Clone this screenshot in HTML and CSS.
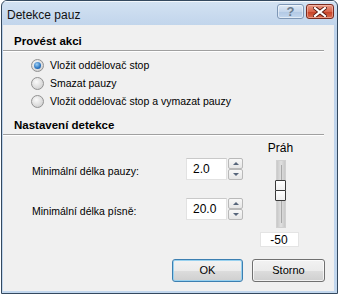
FILE: index.html
```html
<!DOCTYPE html>
<html lang="cs">

<head>
    <meta charset="UTF-8">
    <title>Detekce pauz</title>
    <link rel="stylesheet" href="styles.css">
</head>

<body>
    <div class="window">

        <!-- titulek okna -->
        <div class="titlebar">
            <span class="caption">Detekce pauz</span>
            <span class="tbtn help">?</span>
            <span class="tbtn close">
                <svg width="14" height="10" viewBox="0 0 14 10">
                    <path d="M2 1 L12 9 M12 1 L2 9" stroke="#5a1a10" stroke-width="4" stroke-linecap="square" />
                    <path d="M2 1 L12 9 M12 1 L2 9" stroke="#fff" stroke-width="2.2" stroke-linecap="square" />
                </svg>
            </span>
        </div>

        <div class="client">

            <!-- akce -->
            <div class="group-title">Provést akci</div>
            <ul class="radios">
                <li><span class="radio checked"></span>Vložit oddělovač stop</li>
                <li><span class="radio"></span>Smazat pauzy</li>
                <li><span class="radio"></span>Vložit oddělovač stop a vymazat pauzy</li>
            </ul>

            <!-- detekce -->
            <div class="group-title second">Nastavení detekce</div>
            <div class="settings">
                <div class="fields">
                    <div class="field">
                        <span class="label">Minimální délka pauzy:</span>
                        <span class="input">2.0</span>
                        <span class="spin">
                            <span class="up"></span>
                            <span class="down"></span>
                        </span>
                    </div>
                    <div class="field">
                        <span class="label">Minimální délka písně:</span>
                        <span class="input">20.0</span>
                        <span class="spin">
                            <span class="up"></span>
                            <span class="down"></span>
                        </span>
                    </div>
                </div>

                <div class="slider">
                    <div class="slider-label">Práh</div>
                    <div class="track">
                        <span class="groove"></span>
                        <span class="thumb"></span>
                        <span class="thumb"></span>
                    </div>
                    <div class="value">-50</div>
                </div>
            </div>

            <!-- tlačítka -->
            <div class="buttons">
                <span class="button default">OK</span>
                <span class="button">Storno</span>
            </div>
        </div>
    </div>
</body>

</html>
```

FILE: styles.css
```css
body,
ul,
li {
    margin: 0;
    padding: 0;
}

li {
    list-style: none;
}

body {
    background-color: #fff;
    font-family: "Liberation Sans", Arial, sans-serif;
    font-size: 10.5px;
    color: #000;
}

.window {
    box-sizing: border-box;
    display: flex;
    flex-direction: column;
    width: 337px;
    height: 294px;
    margin-left: 1px;
    border: 1px solid #34495f;
    border-radius: 6px 6px 0 0;
    background: linear-gradient(#d3e2f2, #bdd2ea 30px, #c2d7ee);
    overflow: hidden;
}

.titlebar {
    display: flex;
    align-items: flex-start;
    height: 24px;
    flex: none;
    border-top: 1px solid #f2f7fc;
    box-sizing: border-box;
}

.caption {
    font-size: 12px;
    line-height: 14px;
    margin: 6px 0 0 5px;
    color: #111;
    flex: 1;
}

.tbtn {
    display: flex;
    align-items: center;
    justify-content: center;
    box-sizing: border-box;
    height: 15px;
    margin-top: 2px;
    border-radius: 3px;
}

.help {
    width: 27px;
    border: 1px solid #7e97b6;
    background: linear-gradient(#dfeaf6, #c4d6ec 50%, #b1c8e4 51%, #c3d7ee);
    color: #6c7c8e;
    font-size: 13px;
    font-weight: bold;
    line-height: 13px;
    box-shadow: inset 0 0 0 1px rgba(255, 255, 255, 0.5);
}

.close {
    width: 28px;
    margin: 2px 3px 0 2px;
    border: 1px solid #7a2a1e;
    background: linear-gradient(#e89a86, #d9654c 50%, #c73f24 51%, #d96c4e);
    box-shadow: inset 0 0 0 1px rgba(255, 220, 210, 0.45);
}

.client {
    flex: 1;
    display: flex;
    flex-direction: column;
    margin: 0 3px 2px 1px;
    background-color: #f0f0f0;
}

.group-title {
    margin: 9px 10px 0 0;
    padding: 0 0 2px 11px;
    line-height: 14px;
    font-weight: bold;
    font-size: 11.5px;
    border-bottom: 1px solid #a0a0a0;
    box-shadow: 0 1px 0 #fff;
}

.group-title.second {
    margin-top: 8px;
}

.radios {
    margin-top: 5px;
}

.radios li {
    display: flex;
    align-items: center;
    height: 18px;
    padding-left: 28px;
}

.radio {
    box-sizing: border-box;
    width: 13px;
    height: 13px;
    margin-right: 6px;
    border-radius: 50%;
    border: 1px solid #929292;
    background: radial-gradient(circle at 40% 35%, #fafafa, #d6d6d6 70%, #c4c4c4);
    position: relative;
}

.radio.checked::after {
    content: "";
    position: absolute;
    left: 2px;
    top: 2px;
    width: 7px;
    height: 7px;
    border-radius: 50%;
    background: radial-gradient(circle at 40% 35%, #9fd0f4, #2a74c0 60%, #14468a);
}

.settings {
    display: flex;
    padding-left: 29px;
}

.fields {
    display: flex;
    flex-direction: column;
    gap: 18px;
    margin-top: 23px;
}

.field {
    display: flex;
    align-items: center;
    height: 22px;
}

.label {
    width: 154px;
    padding-top: 3px;
}

.input {
    box-sizing: border-box;
    width: 41px;
    height: 22px;
    padding-left: 6px;
    line-height: 20px;
    font-size: 12px;
    background-color: #fff;
    border: 1px solid #e2e2e2;
    border-top-color: #c9c9c9;
}

.spin {
    display: flex;
    flex-direction: column;
    margin-left: 1px;
    height: 22px;
}

.spin span {
    box-sizing: border-box;
    width: 15px;
    height: 11px;
    border: 1px solid #b9b9b9;
    border-radius: 2px;
    background: linear-gradient(#f8f8f8, #e6e6e6);
    position: relative;
}

.spin span::after {
    content: "";
    position: absolute;
    left: 4px;
    width: 0;
    height: 0;
    border-left: 3px solid transparent;
    border-right: 3px solid transparent;
}

.spin .up::after {
    top: 3px;
    border-bottom: 3px solid #56657a;
}

.spin .down::after {
    top: 3px;
    border-top: 3px solid #56657a;
}

.slider {
    display: flex;
    flex-direction: column;
    align-items: center;
    width: 40px;
    margin: 6px 0 0 16px;
}

.slider-label {
    line-height: 14px;
    font-size: 12px;
    margin-left: 3px;
}

.track {
    position: relative;
    display: flex;
    flex-direction: column;
    align-items: center;
    box-sizing: border-box;
    width: 10px;
    height: 68px;
    margin: 5px 0 0 3px;
    padding-top: 19px;
    border: 1px solid #d0d0d0;
    background: linear-gradient(90deg, #c8c8c8, #e0e0e0 50%, #c8c8c8);
}

.groove {
    position: absolute;
    left: 4px;
    top: 4px;
    bottom: 4px;
    width: 1px;
    background-color: #a8a8a8;
}

.thumb {
    position: relative;
    box-sizing: border-box;
    width: 11px;
    height: 11px;
    margin-bottom: -1px;
    border: 1px solid #3a3a3a;
    border-radius: 1px;
    background: linear-gradient(#fff, #f0f0f0);
    flex: none;
}

.value {
    box-sizing: border-box;
    width: 39px;
    height: 15px;
    margin-top: 4px;
    line-height: 14px;
    text-align: center;
    font-size: 12px;
    background-color: #fff;
    border: 1px solid #e4e4e4;
}

.buttons {
    display: flex;
    justify-content: flex-end;
    gap: 9px;
    margin: auto 9px 9px 0;
}

.button {
    box-sizing: border-box;
    width: 73px;
    height: 23px;
    line-height: 21px;
    text-align: center;
    font-size: 11px;
    border: 1px solid #707070;
    border-radius: 3px;
    background: linear-gradient(#f2f2f2, #ebebeb 50%, #dddddd 51%, #cfcfcf);
    box-shadow: inset 0 0 0 1px rgba(255, 255, 255, 0.7);
}

.button.default {
    width: 71px;
    border-color: #3c7fb1;
    box-shadow: inset 0 0 0 1px #98d1ef;
}
```
